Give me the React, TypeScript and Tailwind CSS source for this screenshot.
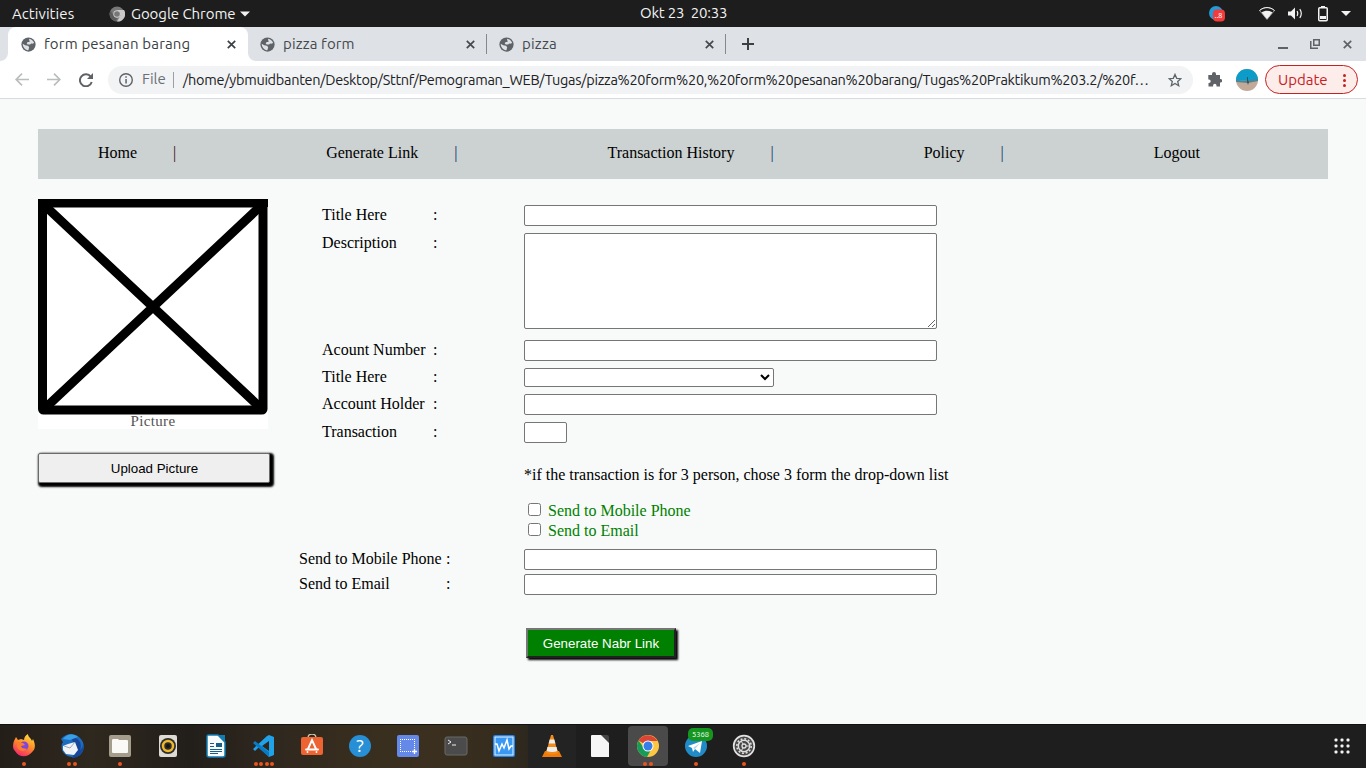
import React from "react";

const ui = "font-['Ubuntu','Noto_Sans',sans-serif]";

const Globe = () => (
  <svg className="size-[15px] shrink-0" viewBox="0 0 16 16">
    <circle cx="8" cy="8" r="7.6" fill="#5f6368" />
    <path d="M8.500 1.800C11 2 13.500 4 14 6.500l-2 .8-1.300-.4-.9 1.100H7.200L6 6.700l1.200-1.500h2zM1.800 7.200l2.700 1.600 3 .4 1.200 1.700-.8 3.300C5 14 2 11.500 1.800 7.200z" fill="#dee1e6" />
  </svg>
);

const Close = ({ className = "" }: { className?: string }) => (
  <svg className={`size-[9px] shrink-0 ${className}`} viewBox="0 0 9 9" stroke="currentColor" strokeWidth="1.700">
    <path d="M.8.8l7.400 7.400M8.200.8L.8 8.200" />
  </svg>
);

const TopBar = () => (
  <header className={`flex h-[27px] shrink-0 items-center bg-[#1d1d1d] text-[15px] text-[#f2f2f2] ${ui}`}>
    <span className="w-[98px] pl-3 pt-px tracking-[0.07px]">Activities</span>
    <svg className="ml-[11px] size-4" viewBox="0 0 16 16">
      <circle cx="8" cy="8" r="7.500" fill="#777" />
      <path d="M8 4h7A7.500 7.500 0 0 1 8 15.500l3.400-6z" fill="#c9c9c9" />
      <path d="M1.500 4.500L5 10l3 2-1 3.400A7.500 7.500 0 0 1 1.500 4.500z" fill="#5b5b5b" />
      <circle cx="8" cy="8" r="3.700" fill="#ccc" />
      <circle cx="8" cy="8" r="2.800" fill="#777" />
    </svg>
    <span className="ml-1.5 w-[105px] whitespace-nowrap pt-px tracking-[-0.05px]">Google Chrome</span>
    <svg className="ml-1 h-[6px] w-[10px]" viewBox="0 0 10 6"><path d="M0 .5h10L5 5.500z" fill="#f2f2f2" /></svg>
    <span className="ml-[390px] w-[90px] whitespace-pre tracking-[-0.2px]">Okt 23  20:33</span>
    <div className="ml-auto flex items-center pr-[15px]">
      <svg className="h-[16px] w-[16px]" viewBox="0 0 16 16">
        <circle cx="7" cy="7" r="7" fill="#239bd8" />
        <rect x="4" y="3.500" width="12" height="12" rx="4" fill="#f23b3b" />
        <text x="5.500" y="12" fontSize="7" fill="#fff" fontFamily="Noto Sans">..8</text>
      </svg>
      <svg className="ml-[34px] h-[13px] w-[16px]" viewBox="0 0 16 13">
        <path d="M.5 3.500C5-.4 11-.4 15.500 3.500L8 12.500z" fill="none" stroke="#aaa" strokeWidth=".8" />
        <path d="M2.500 5.500C6 3.200 10 3.200 13.500 5.500L8 12.300z" fill="#f2f2f2" />
        <path d="M.5 3.500C5-.4 11-.4 15.500 3.500" fill="none" stroke="#f2f2f2" />
      </svg>
      <svg className="ml-[13px] h-[13px] w-[15px]" viewBox="0 0 15 13" fill="none" stroke="#f2f2f2">
        <path d="M0 4.500h3L7 .5v12l-4-4H0z" fill="#f2f2f2" stroke="none" />
        <path d="M9 4.200q1.500 2.300 0 4.600M11.800 2.200q3 4.300 0 8.600" strokeWidth="1.200" />
      </svg>
      <svg className="ml-[15px] h-[16px] w-[10px]" viewBox="0 0 10 16">
        <path d="M3 0h4v2H3z" fill="#f2f2f2" />
        <rect x=".75" y="1.750" width="8.500" height="13" rx="1" fill="none" stroke="#f2f2f2" strokeWidth="1.500" />
        <path d="M2 10h6v3H2z" fill="#f2f2f2" />
      </svg>
      <svg className="ml-[13px] h-[5px] w-[10px]" viewBox="0 0 10 5"><path d="M0 0h10L5 5z" fill="#f2f2f2" /></svg>
    </div>
  </header>
);

const TabStrip = () => (
  <div className={`flex h-[34px] shrink-0 items-end bg-[#dee1e6] text-[15px] text-[#45494d] ${ui}`}>
    <div className="h-2 w-2 bg-white"><div className="size-2 rounded-br-lg bg-[#dee1e6]" /></div>
    <div className="flex h-[34px] w-[240px] items-center rounded-t-lg bg-white pl-[12.500px] pr-[12px]">
      <Globe />
      <span className="ml-[8.500px] whitespace-nowrap tracking-[0.17px] text-[#3c4043]">form pesanan barang</span>
      <Close className="ml-auto text-[#3c4043]" />
    </div>
    <div className="h-2 w-2 bg-white"><div className="size-2 rounded-bl-lg bg-[#dee1e6]" /></div>
    <div className="flex h-[34px] w-[230px] items-center pl-[3.500px] pr-[11px]">
      <Globe />
      <span className="ml-[8.500px] tracking-[0.12px]">pizza form</span>
      <Close className="ml-auto" />
    </div>
    <div className="mb-[7px] h-5 w-px self-end bg-[#85898f]" />
    <div className="flex h-[34px] w-[238px] items-center pl-[11.500px] pr-[11px]">
      <Globe />
      <span className="ml-[8.500px] tracking-[0.2px]">pizza</span>
      <Close className="ml-auto" />
    </div>
    <div className="mb-[7px] h-5 w-px bg-[#85898f]" />
    <svg className="mb-[11px] ml-4 size-3" viewBox="0 0 12 12" stroke="#3c4043" strokeWidth="2"><path d="M6 0v12M0 6h12" /></svg>
    <div className="ml-auto flex h-[34px] items-center pr-[14px] text-[#5f6368]">
      <div className="mt-2 h-[2px] w-[10px] bg-[#5f6368]" />
      <svg className="ml-[22px] size-[10px]" viewBox="0 0 10 10" fill="none" stroke="#5f6368" strokeWidth="1.500">
        <path d="M3.750.75h5.500v5.500h-5.500zM.75 2v7.250H8" />
      </svg>
      <Close className="ml-[23px]" />
    </div>
  </div>
);

const Toolbar = () => (
  <div className={`flex h-[38px] shrink-0 items-center border-b border-[#d9dbde] bg-white text-[15px] ${ui}`}>
    <svg className="ml-[15px] h-[13px] w-[14px]" viewBox="0 0 14 13" fill="none" stroke="#babcbe" strokeWidth="1.700"><path d="M14 6.500H1.500M7 .7L1.200 6.500 7 12.300" /></svg>
    <svg className="ml-[18px] h-[13px] w-[14px]" viewBox="0 0 14 13" fill="none" stroke="#babcbe" strokeWidth="1.700"><path d="M0 6.500h12.500M7 .7l5.800 5.800L7 12.300" /></svg>
    <svg className="ml-[18px] size-[14px]" viewBox="0 0 14 14"><path d="M11.800 3.800A6 6 0 1 0 12.700 9" fill="none" stroke="#5f6368" strokeWidth="2" /><path d="M14 0v6H8z" fill="#5f6368" /></svg>
    <div className="ml-[15px] flex h-7 w-[1085px] items-center rounded-full bg-[#f1f3f4] pl-[11px] pr-[11px]">
      <svg className="size-[14px] shrink-0" viewBox="0 0 14 14"><circle cx="7" cy="7" r="6.300" fill="none" stroke="#5f6368" strokeWidth="1.400" /><path d="M6.300 6h1.500v4.500H6.300zM6.300 3.300h1.500v1.500H6.300z" fill="#5f6368" /></svg>
      <span className="ml-[9px] w-[31px] text-[#6b6f74]">File</span>
      <div className="h-4 w-px bg-[#9aa0a6]" />
      <span className="ml-[9px] w-[968px] shrink-0 whitespace-nowrap text-[14.500px] tracking-[-0.286px] text-[#202124]">/home/ybmuidbanten/Desktop/Sttnf/Pemograman_WEB/Tugas/pizza%20form%20,%20form%20pesanan%20barang/Tugas%20Praktikum%203.2/%20f…</span>
      <svg className="ml-auto size-[14px]" viewBox="0 0 14 14" fill="none" stroke="#5f6368" strokeWidth="1.300"><path d="M7 1.400l1.700 3.900 4.200.4-3.200 2.800 1 4.200L7 10.500l-3.700 2.200 1-4.200L1.100 5.700l4.200-.4z" /></svg>
    </div>
    <svg className="ml-[14px] size-[15px]" viewBox="0 0 15 15"><path d="M5 2a2 2 0 0 1 4 0v1h4v4h.5a1.700 1.700 0 0 1 0 3.500H13v4H9.500V13.500a1.700 1.700 0 0 0-3.400 0v1H1.500V11H2a1.700 1.700 0 0 0 0-3.400h-.7V3H5z" fill="#5f6368" /></svg>
    <svg className="ml-[14px] size-[22px]" viewBox="0 0 22 22">
      <clipPath id="avatar"><circle cx="11" cy="11" r="11" /></clipPath>
      <g clipPath="url(#avatar)"><path d="M0 0h22v22H0z" fill="#c3aa98" /><path d="M0 0h22v11L0 12z" fill="#0c9cc9" /><path d="M0 11l6 1 8-1 8-1v2l-10 2-12-1z" fill="#4e8494" /><path d="M11 8h1v3l1 2-1 3-1-3z" fill="#32525f" /></g>
    </svg>
    <button className="ml-[7px] flex h-[29px] w-[93px] items-center rounded-full border border-[#c5221f] bg-[#fcecea] pl-3 pt-px text-[#c5221f]">
      Update
      <svg className="ml-auto mr-[11px] h-[13px] w-[3px]" viewBox="0 0 3 13" fill="#c5221f"><circle cx="1.500" cy="1.500" r="1.500" /><circle cx="1.500" cy="6.500" r="1.500" /><circle cx="1.500" cy="11.500" r="1.500" /></svg>
    </button>
  </div>
);

const field = "block h-[21px] w-[413px] rounded-[2px] border border-[#767676] bg-white";

const Row = ({ label, className, children }: { label: string; className: string; children: React.ReactNode }) => (
  <div className={`flex items-start ${className}`}>
    <span className="ml-[23px] w-[111px] leading-[19px]">{label}</span>
    <span className="w-[91px] leading-[19px]">:</span>
    {children}
  </div>
);

const WideRow = ({ label, className }: { label: string; className: string }) => (
  <div className={`flex items-start ${className}`}>
    <span className="w-[147px] whitespace-nowrap leading-[19px]">{label}</span>
    <span className="w-[78px] leading-[19px]">:</span>
    <input className={field} />
  </div>
);

const Page = () => (
  <main className="h-[625px] shrink-0 bg-[#f8faf9] px-[38px] pt-[30px] font-['Liberation_Serif',serif] text-[16px] leading-[18px] text-black">
    <nav className="flex h-[50px] bg-[#ccd1d1] pl-[60px] pt-[15px]">
      <div className="flex w-[228.200px] gap-9"><a>Home</a><span className="text-[#3c0510]">|</span></div>
      <div className="flex w-[281.300px] gap-9"><a>Generate Link</a><span className="text-[#06306e]">|</span></div>
      <div className="flex w-[316.200px] gap-9"><a>Transaction History</a><span className="text-[#06306e]">|</span></div>
      <div className="flex w-[230px] gap-9"><a>Policy</a><span className="text-[#06306e]">|</span></div>
      <a>Logout</a>
    </nav>
    <div className="flex pt-5">
      <aside className="w-[261px]">
        <svg className="block h-[230px] w-[230px]" viewBox="0 0 230 230">
          <path d="M0 0h230v230H0z" fill="#fff" />
          <path d="M4 4l222 208M226 4L4 212" stroke="#000" strokeWidth="9" />
          <path d="M0 0h230v8H0z" />
          <rect x="4.500" y="4" width="220.500" height="207" rx="1" fill="none" stroke="#000" strokeWidth="9" strokeLinejoin="round" />
          <text x="115" y="227" textAnchor="middle" fontFamily="Liberation Serif" fontSize="15" letterSpacing=".35" fill="#555">Picture</text>
        </svg>
        <button className="mt-6 block h-[30px] w-[232px] rounded-[2px] border border-[#6b6b6b] bg-[#efefef] pl-px pt-0.5 font-['Liberation_Sans',sans-serif] text-[13.333px] leading-none shadow-[2px_2px_2px_2px_black]">Upload Picture</button>
      </aside>
      <form>
        <Row label="Title Here" className="h-[28px] pt-[6px] mb-[6px]"><input className={field} /></Row>
        <Row label="Description" className="h-[107px]"><textarea className="block h-[96px] w-[413px] resize rounded-[2px] border border-[#767676] bg-white" /></Row>
        <Row label="Acount Number" className="h-[27px]"><input className={field} /></Row>
        <Row label="Title Here" className="h-[27px]">
          <div className="relative mt-px">
            <select className="block h-[19px] w-[250px] appearance-none rounded-[2px] border border-[#767676] bg-white" />
            <svg className="pointer-events-none absolute right-1 top-[6px] h-[7px] w-[10px]" viewBox="0 0 10 7" fill="none" stroke="#000" strokeWidth="2"><path d="M1 1l4 4 4-4" /></svg>
          </div>
        </Row>
        <Row label="Account Holder" className="h-[28px]"><input className={field} /></Row>
        <Row label="Transaction" className="h-[43px]"><input className="block h-[21px] w-[43px] rounded-[2px] border border-[#767676] bg-white" /></Row>
        <p className="ml-[225px] h-[37px] leading-[19px]">*if the transaction is for 3 person, chose 3 form the drop-down list</p>
        <div className="ml-[229px] text-[#008000]">
          <label className="flex h-5 items-start"><input type="checkbox" className="mr-[7px] mt-px size-[13px]" /><span className="mt-[-1px] leading-5">Send to Mobile Phone</span></label>
          <label className="flex h-5 items-start"><input type="checkbox" className="mr-[7px] mt-px size-[13px]" /><span className="mt-[-1px] leading-5">Send to Email</span></label>
        </div>
        <WideRow label="Send to Mobile Phone" className="mt-[7px] h-[25px]" />
        <WideRow label="Send to Email" className="h-[54px]" />
        <button type="button" className="ml-[227px] block h-[30px] w-[150px] border-2 border-[#767676] border-b-[#212121] border-r-[#212121] bg-[#008000] pt-px font-['Liberation_Sans',sans-serif] text-[13.333px] leading-none text-white shadow-[2px_2px_2px_black]">Generate Nabr Link</button>
      </form>
    </div>
  </main>
);

const Firefox = () => (
  <svg viewBox="0 0 24 24">
    <defs><linearGradient id="fx" x1=".8" y1="0" x2=".3" y2="1"><stop offset="0" stopColor="#ffe24a" /><stop offset=".45" stopColor="#ff9226" /><stop offset="1" stopColor="#f5246b" /></linearGradient></defs>
    <path d="M2 7l2-4 2 3 3-1 3 1c0-3 2-5 4-6 0 3 3 4 4 7l1-2c3 6 2 10 0 12-5 7-14 7-18 0C.5 15 .8 10 2 7z" fill="url(#fx)" />
    <circle cx="12" cy="12" r="4.500" fill="#8148d6" /><path d="M5 8l6 1 2 2-4 1 1 2 5 1c-4 4-9 1-10-2z" fill="#ff7c2e" />
  </svg>
);

const icons: { dots: number; art: React.ReactNode; active?: boolean }[] = [
  { dots: 1, art: <Firefox /> },
  { dots: 2, art: <svg viewBox="0 0 24 24"><path d="M1 5C5-1 14-1 19 3c6 5 6 12 2 17-5 5-14 4-18-2-2-4-2-7 0-10z" fill="#1c6cc0" /><path d="M11 3c7 0 12 6 9 13 2-1 3-4 3-6 2 8-4 14-11 14l4-8z" fill="#17479a" /><path d="M3 5C7-1 14-1 18 3l-8 3z" fill="#3a9fe4" /><path d="M3 12l5-2 7-2 3 8-4 5-8-1-3-4z" fill="#f1f3f6" /><path d="M4 12l6 2 5-6" fill="none" stroke="#9ab" /></svg> },
  { dots: 1, art: <svg viewBox="0 0 24 24"><rect x="1" y="1" width="22" height="22" rx="2" fill="#a59d8b" /><path d="M4 6.500q0-1.500 1-1.500h5l1 1h8q1 0 1 1V18q0 1-1 1H5q-1 0-1-1z" fill="#faf9f6" /></svg> },
  { dots: 0, art: <svg viewBox="0 0 24 24"><rect x="3" y="1" width="18" height="22" rx="2" fill="#dedbd5" /><circle cx="12" cy="12" r="8" fill="#2d2d2d" /><circle cx="12" cy="12" r="5" fill="none" stroke="#efb72c" strokeWidth="2.500" /><circle cx="12" cy="12" r="2" fill="#151515" /></svg> },
  { dots: 0, art: <svg viewBox="0 0 24 24"><path d="M4 1h10l7 7v13q0 2-2 2H5q-2 0-2-2V2z" fill="#f9fbfc" stroke="#117db5" strokeWidth="1.500" /><path d="M14 1h7v8z" fill="#117db5" /><path d="M6 9.500h4M6 12.500h4M6 15.500h12M6 17.500h12M6 19.500h8" stroke="#195f89" /><path d="M12 9h6v4h-6z" fill="#195f89" /></svg> },
  { dots: 4, art: <svg viewBox="0 0 24 24"><path d="M17 1l5 2v18l-5 2L7 13l-4 4-2-2 14-13zM17 7l-7 5 7 5z" fill="#21a1e8" fillRule="evenodd" /><path d="M1 9l2-2 14 11v5z" fill="#087bc5" /></svg> },
  { dots: 0, art: <svg viewBox="0 0 24 24"><path d="M8 4q0-4 4-4t4 4" fill="none" stroke="#cfc3ad" strokeWidth="1.300" /><rect x="1" y="3" width="22" height="18" rx="2" fill="#ed6432" /><path d="M8 15l4-9 4 9M6 15.500h12M7.500 18h0M16.500 18h0" strokeLinecap="round" fill="none" stroke="#fff" strokeWidth="1.900" /></svg> },
  { dots: 0, art: <svg viewBox="0 0 24 24"><circle cx="12" cy="12" r="11" fill="#268fd5" /><text x="12" y="18" textAnchor="middle" fontFamily="Noto Sans" fontSize="17" fill="#fff">?</text></svg> },
  { dots: 0, art: <svg viewBox="0 0 24 24"><rect x="1" y="1" width="22" height="22" rx="2" fill="#6589e8" /><path d="M4 5.500h15M4 17.500h12M4.500 5v13M18.500 5v9" fill="none" stroke="#fff" strokeDasharray="1 1" /><path d="M18.500 15v5M16 17.500h5" stroke="#fff" strokeWidth="1.300" /></svg> },
  { dots: 0, art: <svg viewBox="0 0 24 24"><rect x="1" y="3" width="22" height="18" rx="2" fill="#4b4b4b" stroke="#696969" /><path d="M4 6l3 2-3 2M8 11h4" stroke="#eee" fill="none" /></svg> },
  { dots: 0, art: <svg viewBox="0 0 24 24"><rect x="1" y="1" width="22" height="22" rx="2" fill="#2284ed" /><rect x="3" y="3" width="18" height="18" fill="#3898f4" stroke="#eaf5ff" /><path d="M3 10h2l2 7 3-7 2 4 3-8 2 9 2-3h2" stroke="#fff" strokeWidth="1.500" fill="none" /></svg> },
  { dots: 0, art: <svg viewBox="0 0 24 24"><path d="M5 17h14l3 6H2z" fill="#ee7b0b" /><path d="M11 1h2l5 18q-6 3-12 0z" fill="#f48b17" /><path d="M9.700 5.500h4.600l1.100 4H8.600zM7.500 13h9l1 4q-5 2-11 0z" fill="#eee" /></svg> },
  { dots: 0, art: <svg viewBox="0 0 24 24"><path d="M4 1h12l5 6v16H4q-1 0-1-1V2q0-1 1-1z" fill="#f6f6f6" /><path d="M13 1h6q2 0 2 2v6z" fill="#454545" /></svg> },
  { dots: 2, active: true, art: <svg viewBox="0 0 24 24"><circle cx="12" cy="12" r="11" fill="#fdc743" /><path d="M12 12L2.500 6.500A11 11 0 0 1 21.500 7H12z" fill="#dc4535" /><path d="M2.500 6.500A11 11 0 0 0 11 23l5-9-4-1-4 1z" fill="#179b58" /><circle cx="12" cy="12" r="5.500" fill="#fff" /><circle cx="12" cy="12" r="4.500" fill="#397de8" /></svg> },
  { dots: 1, art: <svg viewBox="0 0 24 24"><circle cx="12" cy="12" r="11" fill="#218bc7" /><path d="M4 12l14-5-2 12-5-4-2 3-1-4z" fill="#fff" /><path d="M9 14l7-5-5 6" fill="#b6d6e8" /></svg> },
  { dots: 1, art: <svg viewBox="0 0 24 24"><circle cx="12" cy="12" r="10.300" fill="#484848" stroke="#e2e2e2" strokeWidth="1.700" /><circle cx="12" cy="12" r="7.200" fill="none" stroke="#ddd" strokeWidth="1.600" strokeDasharray="2 1.770" /><circle cx="12" cy="12" r="5.700" fill="none" stroke="#ddd" strokeWidth="1.500" /><circle cx="12" cy="12" r="2" fill="none" stroke="#ddd" strokeWidth="1.300" /><path d="M14 12h4M11 10l-2-3M11 14l-2 3" stroke="#ddd" /></svg> },
];

const Dock = () => (
  <footer className="flex h-[44px] shrink-0 border-t border-[#111] bg-[linear-gradient(90deg,#241e19_0,#2f281e_90px,#221e1a_190px,#2e271e_265px,#382e1f_360px,#3b301f_430px,#352c1e_500px,#2d271e_528px,#232323_528px,#232323_576px,#1e1e1e_576px)]">
    {icons.map((item, i) => (
      <div key={i} className="relative flex w-12 justify-center">
        {item.active && <div className="absolute inset-x-1 bottom-[2px] top-px rounded-[4px] bg-[#4a4a4a]" />}
        <div className="relative mt-[9px] size-6">{item.art}</div>
        <div className="absolute bottom-[2px] flex gap-[1.500px]">
          {Array.from({ length: item.dots }, (_, d) => <span key={d} className="size-[4px] rounded-full bg-[#e95420]" />)}
        </div>
        {i === 14 && <span className={`absolute left-[16px] top-[3px] h-[13px] w-[25px] rounded-[5px] bg-[#14961f] text-center text-[7.500px] leading-[13px] text-white ${ui}`}>5368</span>}
      </div>
    ))}
    <svg className="ml-auto mr-4 mt-[13px] size-4" viewBox="0 0 16 16" fill="#f3f3f3">
      {[0, 6, 12].map((y) => [0, 6, 12].map((x) => <rect key={`${x}-${y}`} x={x + 0.5} y={y + 0.5} width="3" height="3" rx="1" />))}
    </svg>
  </footer>
);

export default function App() {
  return (
    <div className="flex h-[768px] w-[1366px] flex-col overflow-hidden">
      <TopBar />
      <TabStrip />
      <Toolbar />
      <Page />
      <Dock />
    </div>
  );
}
